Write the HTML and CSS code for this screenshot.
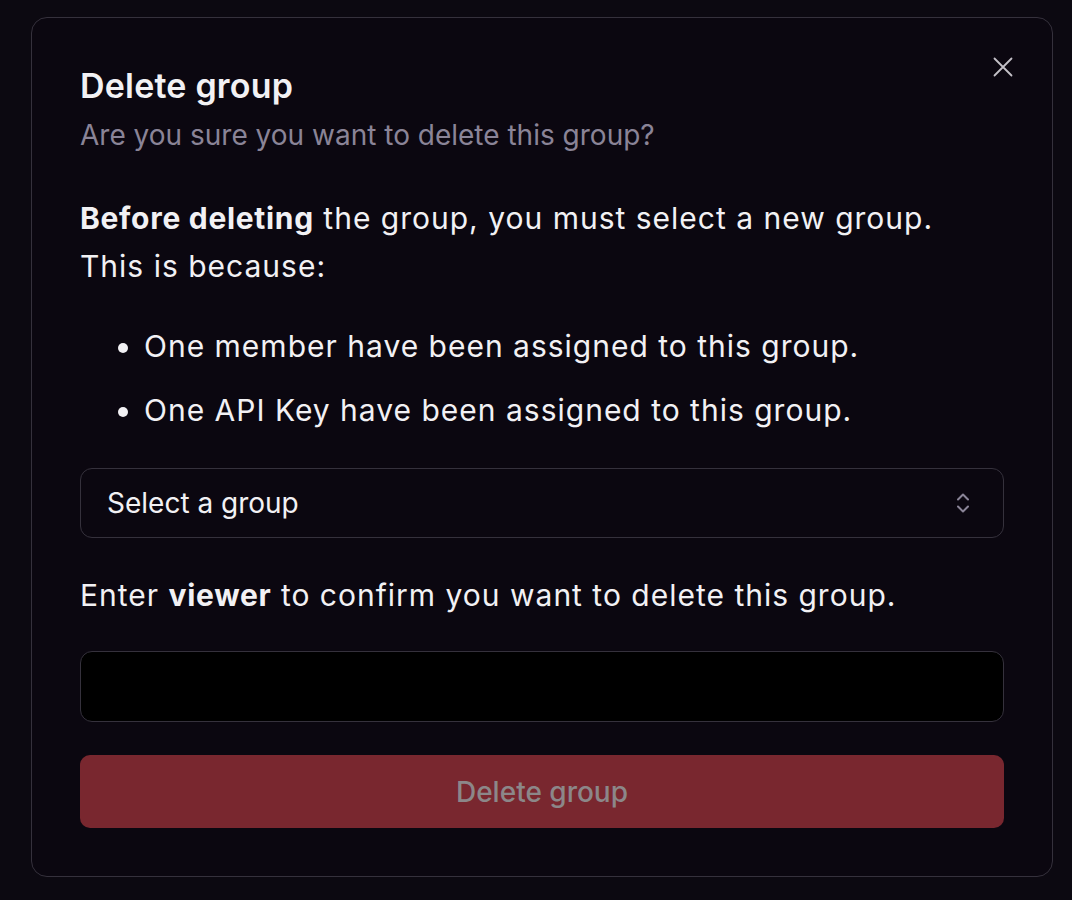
FILE: index.html
```html
<!DOCTYPE html>
<html lang="en">
<head>
<meta charset="utf-8">
<title>Delete group</title>
<link rel="stylesheet" href="styles.css">
</head>
<body>
<div class="page">
  <div class="modal">
    <button class="close" aria-label="Close">
      <svg width="20" height="20" viewBox="0 0 20 20" fill="none" stroke="currentColor" stroke-width="1.8" stroke-linecap="round"><path d="M1.5 1.5L18.5 18.5M18.5 1.5L1.5 18.5"/></svg>
    </button>
    <h1 class="title">Delete group</h1>
    <p class="subtitle">Are you sure you want to delete this group?</p>
    <p class="text"><strong>Before deleting</strong> the group, you must select a new group.<br>This is because:</p>
    <ul class="reasons">
      <li>One member have been assigned to this group.</li>
      <li>One API Key have been assigned to this group.</li>
    </ul>
    <div class="select">
      <span>Select a group</span>
      <svg width="16" height="24" viewBox="0 0 16 24" fill="none" stroke="currentColor" stroke-width="2" stroke-linecap="round" stroke-linejoin="round"><path d="M3 8.5L8 3.5L13 8.5M3 15.5L8 20.5L13 15.5"/></svg>
    </div>
    <p class="text confirm">Enter <strong>viewer</strong> to confirm you want to delete this group.</p>
    <div class="input"></div>
    <button class="delete">Delete group</button>
  </div>
</div>
</body>
</html>
```
FILE: styles.css
```css
html, body {
  margin: 0;
  padding: 0;
  background: #0c0911;
}
body {
  font-family: Inter, "Noto Sans", sans-serif;
  color: #f2f1f4;
}
.page {
  padding: 17px 19px 24px 31px;
}
.modal {
  position: relative;
  background: #0b0710;
  border: 1px solid #35313c;
  border-radius: 16px;
  padding: 48px 48px 48px 48px;
}
.close {
  position: absolute;
  top: 39px;
  right: 39px;
  background: none;
  border: none;
  padding: 0;
  color: #c4c1c8;
  cursor: pointer;
}
.title {
  margin: 0;
  font-size: 34px;
  font-weight: 600;
  line-height: 40px;
  letter-spacing: 0.2px;
}
.subtitle {
  margin: 11px 0 0;
  font-size: 28px;
  line-height: 36px;
  color: #8a8497;
}
.text {
  margin: 41px 0 0;
  font-size: 30px;
  line-height: 48px;
  letter-spacing: 1px;
}
.text strong {
  font-weight: 700;
  letter-spacing: 0.7px;
}
.reasons {
  margin: 32px 0 0;
  padding-left: 64px;
  font-size: 30px;
  line-height: 48px;
  letter-spacing: 1px;
}
.reasons li + li {
  margin-top: 16px;
}
.select {
  margin-top: 34px;
  height: 68px;
  border: 1px solid #35313c;
  border-radius: 12px;
  display: flex;
  align-items: center;
  justify-content: space-between;
  padding: 0 32px 0 26px;
  font-size: 28px;
  color: #f2f1f4;
}
.select svg {
  color: #8a8497;
}
.confirm {
  margin-top: 33px;
}
.input {
  margin-top: 32px;
  height: 69px;
  background: #000;
  border: 1px solid #35313c;
  border-radius: 12px;
}
.delete {
  display: block;
  width: 100%;
  margin-top: 33px;
  height: 73px;
  border: none;
  border-radius: 10px;
  background: #79272f;
  color: #8c8789;
  font-family: Inter, "Noto Sans", sans-serif;
  font-size: 28px;
  font-weight: 500;
}
```
